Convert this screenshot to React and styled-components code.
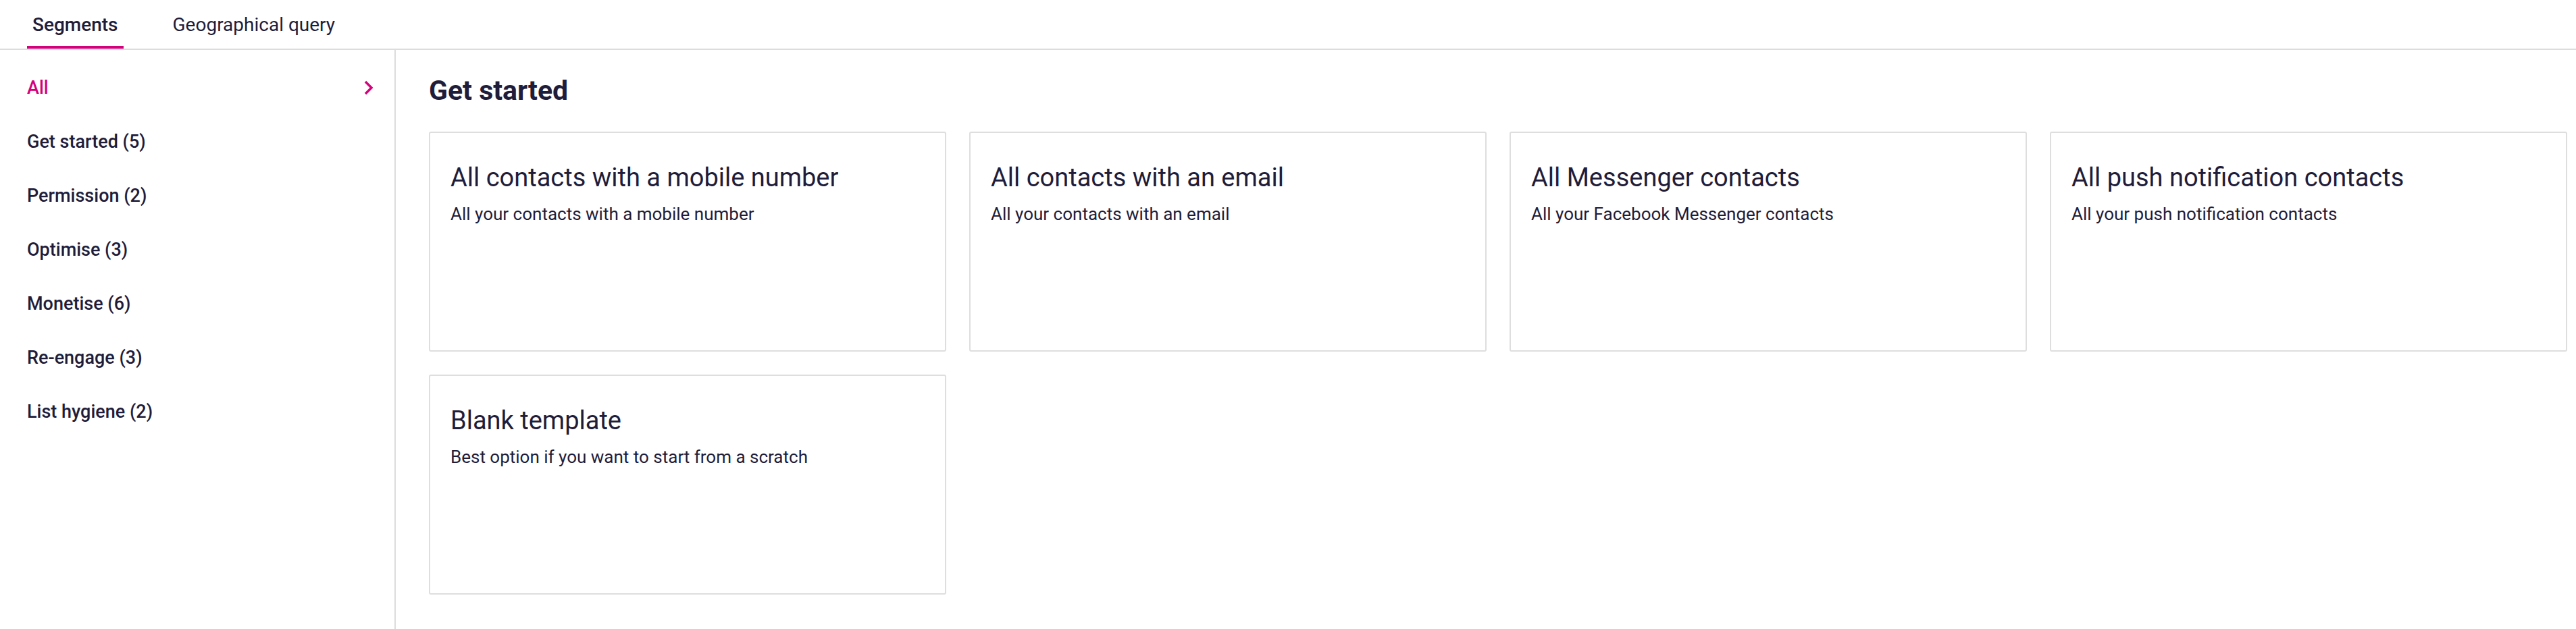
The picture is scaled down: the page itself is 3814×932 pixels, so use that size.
import React from "react";
import styled, { createGlobalStyle } from "styled-components";

const GlobalStyle = createGlobalStyle`
  * { box-sizing: border-box; }
  body {
    margin: 0;
    background: #fff;
    font-family: Roboto, "Liberation Sans", sans-serif;
    color: #1f1d3a;
  }
`;

const Page = styled.div`
  width: 100%;
  min-height: 932px;
  display: flex;
  flex-direction: column;
`;

const TabBar = styled.div`
  display: flex;
  gap: 65px;
  padding-left: 40px;
  border-bottom: 2px solid #dcdcdc;
`;

const Tab = styled.div`
  height: 72px;
  padding: 4px 8px 0;
  display: flex;
  align-items: center;
  font-size: 28px;
  font-weight: ${(p) => (p.active ? 500 : 400)};
  color: #1f1d3a;
  border-bottom: 4px solid ${(p) => (p.active ? "#d6007c" : "transparent")};
`;

const Body = styled.div`
  flex: 1;
  display: flex;
`;

const Sidebar = styled.nav`
  width: 586px;
  flex-shrink: 0;
  border-right: 2px solid #dcdcdc;
  padding: 16px 30px 0 40px;
  min-height: 858px;
`;

const NavItem = styled.div`
  height: 80px;
  display: flex;
  align-items: center;
  justify-content: space-between;
  font-size: 27px;
  font-weight: 500;
  color: ${(p) => (p.active ? "#d6007c" : "#1f1d3a")};
`;

const Content = styled.main`
  flex: 1;
  padding: 36px 13px 0 49px;
`;

const Heading = styled.h2`
  margin: 0 0 37px;
  font-size: 41px;
  line-height: 48px;
  font-weight: 700;
  color: #1f1d3a;
`;

const Grid = styled.div`
  display: grid;
  grid-template-columns: repeat(4, 1fr);
  gap: 34px;
`;

const Card = styled.div`
  height: 326px;
  border: 2px solid #dedede;
  border-radius: 3px;
  padding: 44px 30px 0;
  background: #fff;
`;

const CardTitle = styled.div`
  font-size: 38px;
  line-height: 44px;
  font-weight: 400;
  color: #1f1d3a;
`;

const CardText = styled.div`
  margin-top: 17px;
  font-size: 26px;
  line-height: 30px;
  color: #1f1d3a;
`;

const Chevron = () => (
  <svg width="16" height="22" viewBox="0 0 16 22" fill="none">
    <path d="M3 2l9 9-9 9" stroke="#d6007c" strokeWidth="3.5" />
  </svg>
);

const categories = [
  "All",
  "Get started (5)",
  "Permission (2)",
  "Optimise (3)",
  "Monetise (6)",
  "Re-engage (3)",
  "List hygiene (2)",
];

const templates = [
  ["All contacts with a mobile number", "All your contacts with a mobile number"],
  ["All contacts with an email", "All your contacts with an email"],
  ["All Messenger contacts", "All your Facebook Messenger contacts"],
  ["All push notification contacts", "All your push notification contacts"],
  ["Blank template", "Best option if you want to start from a scratch"],
];

export default function App() {
  return (
    <Page>
      <GlobalStyle />
      <TabBar>
        <Tab active>Segments</Tab>
        <Tab>Geographical query</Tab>
      </TabBar>
      <Body>
        <Sidebar>
          {categories.map((c, i) => (
            <NavItem key={c} active={i === 0}>
              {c}
              {i === 0 && <Chevron />}
            </NavItem>
          ))}
        </Sidebar>
        <Content>
          <Heading>Get started</Heading>
          <Grid>
            {templates.map(([title, text]) => (
              <Card key={title}>
                <CardTitle>{title}</CardTitle>
                <CardText>{text}</CardText>
              </Card>
            ))}
          </Grid>
        </Content>
      </Body>
    </Page>
  );
}
